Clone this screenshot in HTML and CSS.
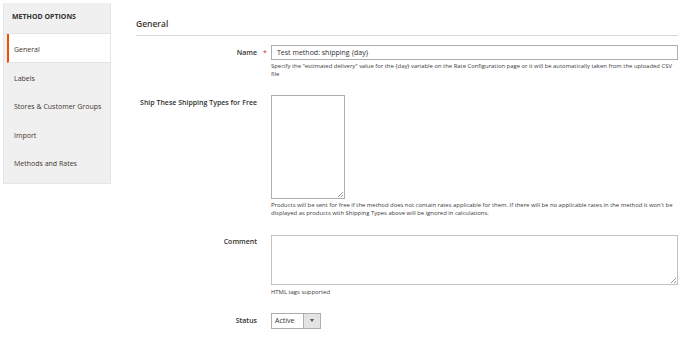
FILE: index.html
```html
<!DOCTYPE html>
<html>
<head>
<meta charset="utf-8">
<link rel="stylesheet" href="styles.css">
</head>
<body>
<div class="page">
  <aside class="sidebar">
    <div class="side-title">METHOD OPTIONS</div>
    <ul class="side-list">
      <li class="side-item active">General</li>
      <li class="side-item">Labels</li>
      <li class="side-item">Stores &amp; Customer Groups</li>
      <li class="side-item">Import</li>
      <li class="side-item">Methods and Rates</li>
    </ul>
  </aside>
  <main class="main">
    <h2 class="section-title">General</h2>
    <div class="form">
      <div class="row row-name">
        <div class="label">Name</div>
        <div class="req">*</div>
        <div class="control">
          <div class="input">Test method: shipping {day}</div>
          <div class="note">Specify the "estimated delivery" value for the {day} variable on the Rate Configuration page or it will be automatically taken from the uploaded CSV file</div>
        </div>
      </div>
      <div class="row row-ship">
        <div class="label">Ship These Shipping Types for Free</div>
        <div class="req"></div>
        <div class="control">
          <div class="multiselect"><span class="grip"></span></div>
          <div class="note">Products will be sent for free if the method does not contain rates applicable for them. If there will be no applicable rates in the method it won't be displayed as products with Shipping Types above will be ignored in calculations.</div>
        </div>
      </div>
      <div class="row row-comment">
        <div class="label">Comment</div>
        <div class="req"></div>
        <div class="control">
          <div class="textarea"><span class="grip"></span></div>
          <div class="note note-html">HTML tags supported</div>
        </div>
      </div>
      <div class="row row-status">
        <div class="label">Status</div>
        <div class="req"></div>
        <div class="control">
          <div class="select"><span class="sel-text">Active</span><span class="sel-btn"><svg width="4" height="3" viewBox="0 0 4 3"><path d="M0 0H4L2 3Z" fill="#555"/></svg></span></div>
        </div>
      </div>
    </div>
  </main>
</div>
</body>
</html>
```
FILE: styles.css
```css
* { box-sizing: border-box; }
html, body { margin: 0; padding: 0; background: #fff; }
body {
  font-family: "Open Sans", "Liberation Sans", sans-serif;
  color: #303030;
  width: 685px;
  height: 346px;
  overflow: hidden;
}
.page {
  display: flex;
  align-items: flex-start;
  padding: 3px 7px 0 3px;
}
.sidebar {
  width: 108px;
  flex: none;
  background: #f0f0f0;
  border: 1px solid #e6e6e6;
  border-top: none;
  padding-bottom: 6px;
}
.side-title {
  height: 31px;
  line-height: 27px;
  padding-left: 8px;
  font-size: 7px;
  font-weight: 700;
  color: #303030;
  border-bottom: 1px solid #e3e3e3;
}
.side-list {
  list-style: none;
  margin: 0;
  padding: 0 0 0 3px;
}
.side-item {
  height: 28.5px;
  line-height: 24px;
  padding-top: 4px;
  padding-left: 7px;
  font-size: 7px;
  color: #41362f;
  border-bottom: 1px solid transparent;
}
.side-item.active {
  background: #fff;
  border-left: 2px solid #eb5202;
  padding-left: 5px;
  border-bottom-color: #e3e3e3;
}
.main {
  flex: 1;
  margin-left: 25px;
}
.section-title {
  margin: 0;
  font-size: 8.5px;
  font-weight: 600;
  color: #41362f;
  height: 33px;
  line-height: 42px;
  border-bottom: 1px solid #d6d6d6;
}
.form { padding-top: 9px; }
.row {
  display: grid;
  grid-template-columns: 121px 14px 1fr;
  align-items: start;
}
.label {
  text-align: right;
  font-size: 7px;
  font-weight: 600;
  color: #303030;
  line-height: 15px;
}
.req {
  color: #e22626;
  font-size: 7px;
  text-align: center;
  line-height: 15px;
  padding-left: 2px;
}
.control { min-width: 0; }
.input {
  height: 15px;
  border: 1px solid #adadad;
  font-size: 7px;
  line-height: 13px;
  padding-left: 5px;
  color: #303030;
}
.note {
  font-size: 5.9px;
  line-height: 7.5px;
  margin-top: 3px;
  color: #3a3a3a;
}
.row-ship { margin-top: 17px; }
.row-ship .label { line-height: 12px; margin-top: 2px; }
.multiselect {
  position: relative;
  width: 74px;
  height: 104px;
  border: 1px solid #adadad;
}
.row-ship .note { margin-top: 3px; }
.grip {
  position: absolute;
  right: 1px;
  bottom: 1px;
  width: 5px;
  height: 5px;
  background: linear-gradient(135deg, transparent 45%, #999 45%, #999 55%, transparent 55%, transparent 72%, #999 72%, #999 82%, transparent 82%);
}
.row-comment { margin-top: 18px; }
.textarea {
  position: relative;
  height: 50px;
  border: 1px solid #c2c2c2;
}
.row-comment .label { line-height: 14px; }
.note-html { margin-top: 4px; }
.row-status { margin-top: 16px; }
.row-status .label { line-height: 16px; }
.select {
  display: flex;
  width: 50px;
  height: 16px;
  border: 1px solid #adadad;
  font-size: 7px;
}
.sel-text {
  flex: 1;
  line-height: 14px;
  padding-left: 3px;
}
.sel-btn {
  width: 17px;
  background: #e3e3e3;
  border-left: 1px solid #adadad;
  display: flex;
  align-items: center;
  justify-content: center;
}
.sel-btn svg { display: block; }
```
